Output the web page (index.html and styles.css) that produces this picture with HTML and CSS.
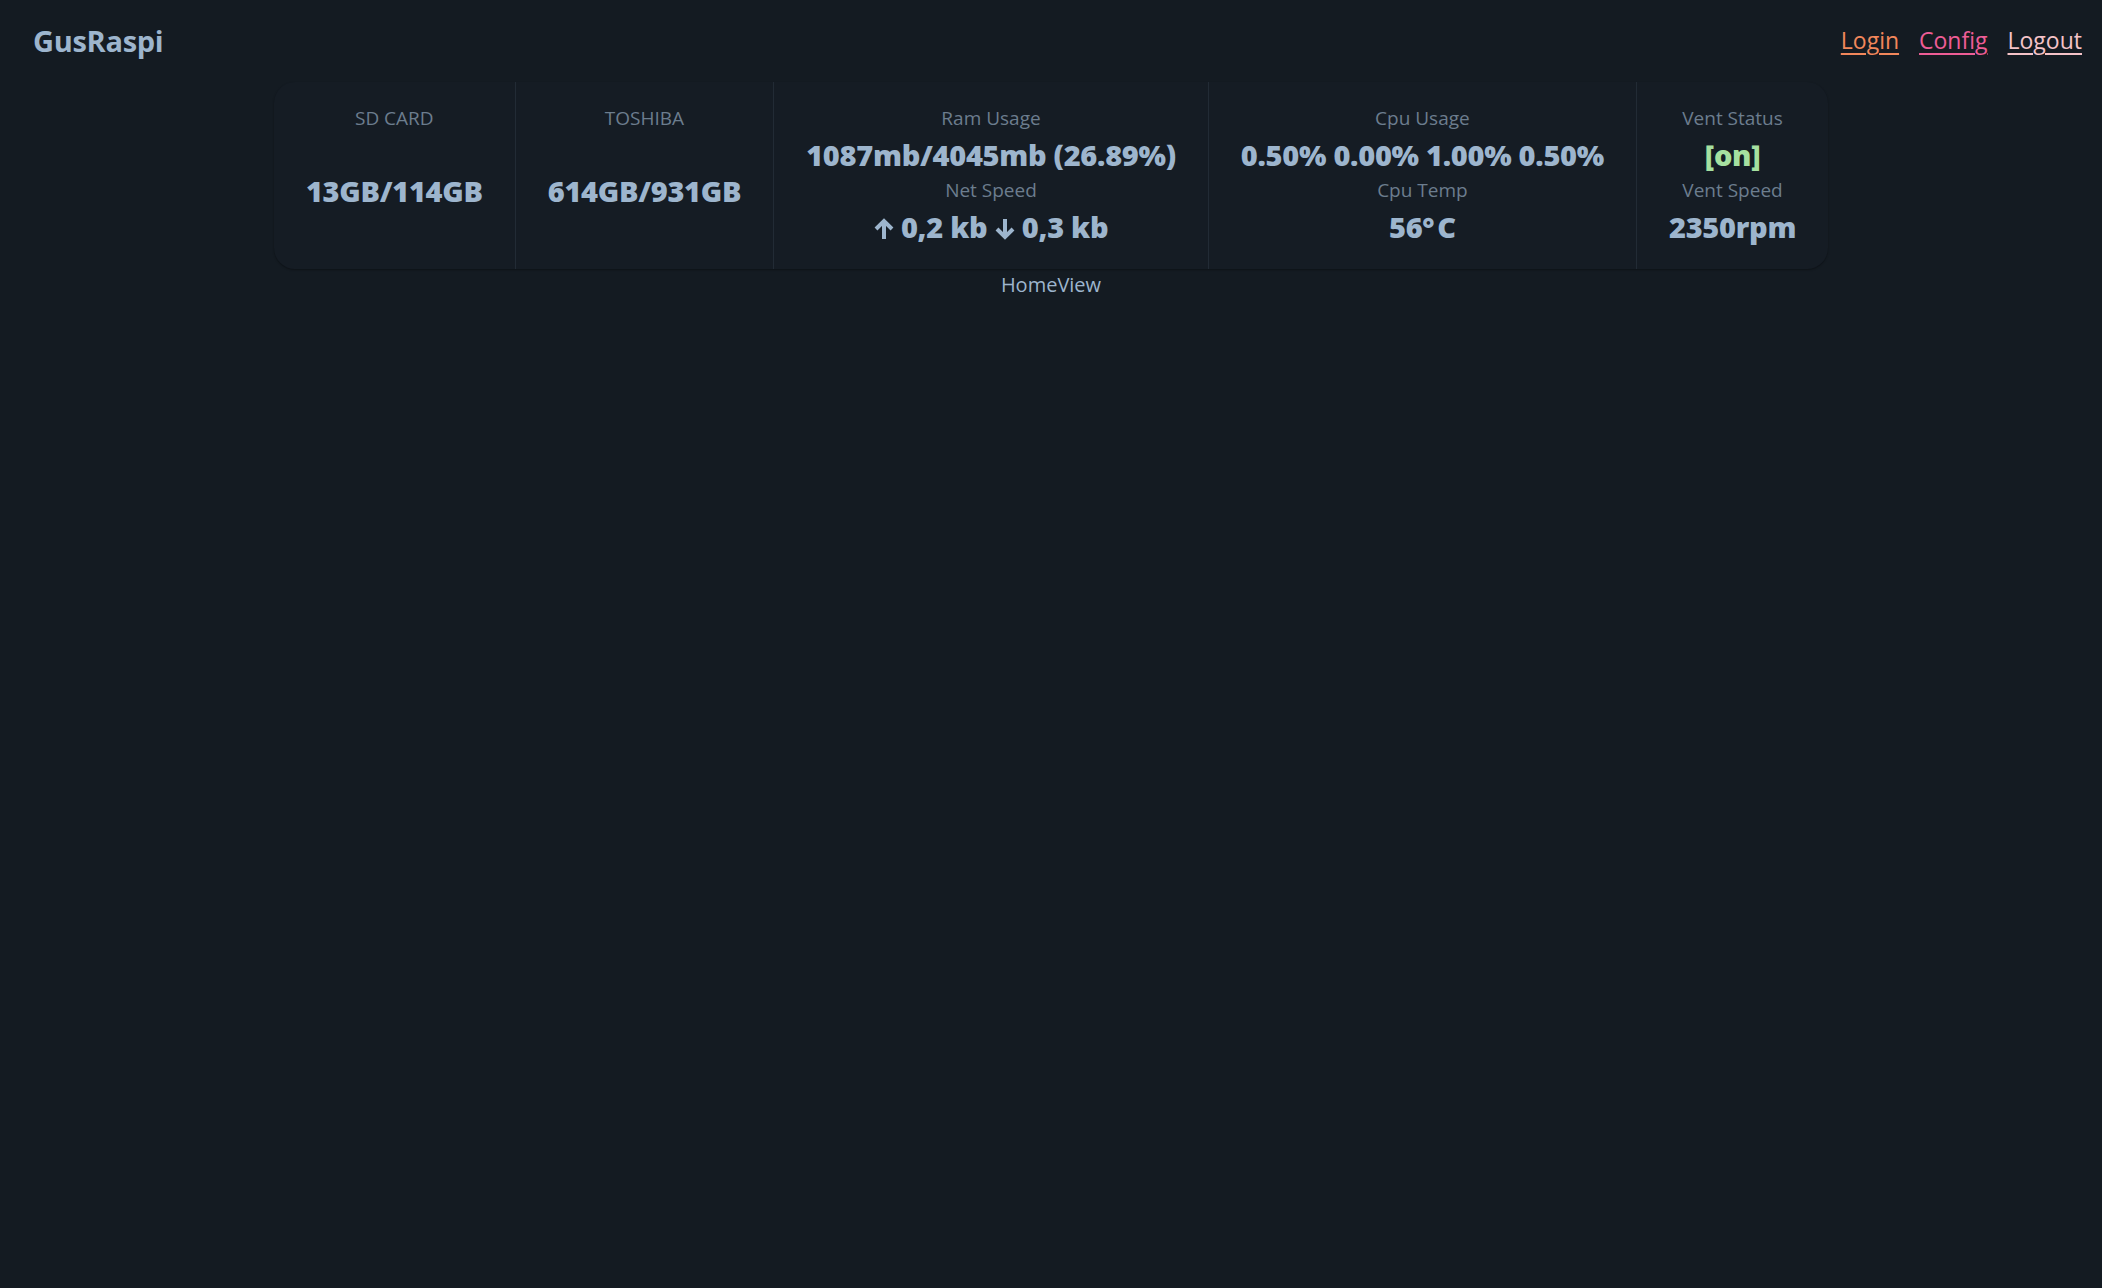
FILE: index.html
```html
<!DOCTYPE html>
<html lang="en">
<head>
<meta charset="utf-8">
<title>GusRaspi</title>
<link rel="stylesheet" href="styles.css">
</head>
<body>
<header class="navbar">
  <a class="brand">GusRaspi</a>
  <nav class="links">
    <a class="link link-login" href="#">Login</a>
    <a class="link link-config" href="#">Config</a>
    <a class="link link-logout" href="#">Logout</a>
  </nav>
</header>
<main class="main">
  <section class="stats">
    <div class="stat">
      <div class="stat-title">SD CARD</div>
      <div class="stat-value">13GB/114GB</div>
    </div>
    <div class="stat">
      <div class="stat-title">TOSHIBA</div>
      <div class="stat-value">614GB/931GB</div>
    </div>
    <div class="stat">
      <div class="stat-title">Ram Usage</div>
      <div class="stat-value">1087mb/4045mb (26.89%)</div>
      <div class="stat-title">Net Speed</div>
      <div class="stat-value"><svg class="arrow" viewBox="0 0 20 22" aria-hidden="true"><path d="M10 21V3M2 11l8-8 8 8"/></svg> 0,2 kb <svg class="arrow" viewBox="0 0 20 22" aria-hidden="true"><path d="M10 1v18M2 11l8 8 8-8"/></svg> 0,3 kb</div>
    </div>
    <div class="stat">
      <div class="stat-title">Cpu Usage</div>
      <div class="stat-value">0.50% 0.00% 1.00% 0.50%</div>
      <div class="stat-title">Cpu Temp</div>
      <div class="stat-value">56°<span class="deg-gap"></span>C</div>
    </div>
    <div class="stat">
      <div class="stat-title">Vent Status</div>
      <div class="stat-value stat-on">[on]</div>
      <div class="stat-title">Vent Speed</div>
      <div class="stat-value">2350rpm</div>
    </div>
  </section>
  <p class="view-name">HomeView</p>
</main>
</body>
</html>
```
FILE: styles.css
```css
html, body {
  margin: 0;
  padding: 0;
  background: #141b22;
  color: #9db5cd;
  font-family: "Open Sans", "Noto Sans", sans-serif;
}

.navbar {
  height: 80px;
  padding: 0 20px 2px 33px;
  display: flex;
  align-items: center;
  justify-content: space-between;
}

.brand {
  font-size: 29px;
  font-weight: 700;
  color: #9db5cd;
  letter-spacing: -0.3px;
}

.links {
  display: flex;
  gap: 20px;
  font-size: 23px;
}

.link {
  text-decoration: underline;
  text-underline-offset: 4px;
  text-decoration-thickness: 2px;
}

.link-login { color: #f2875b; }
.link-config { color: #ee5d96; }
.link-logout { color: #f5c3c8; }

.main {
  display: flex;
  flex-direction: column;
  align-items: center;
}

.stats {
  display: flex;
  background: #151c24;
  border-radius: 21px;
  box-shadow: 0 1px 2px rgba(0, 0, 0, 0.35);
}

.stat {
  display: grid;
  padding: 23px 32px 20px;
  text-align: center;
}

.stat + .stat {
  border-left: 1px solid #222b35;
}

.stat-title {
  font-size: 19px;
  line-height: 27px;
  color: #6c7d8e;
  white-space: nowrap;
}

.stat-value {
  font-size: 29px;
  line-height: 45px;
  font-weight: 800;
  color: #9db5cd;
  white-space: nowrap;
  letter-spacing: -0.3px;
}

.stat-on {
  color: #a6e0a0;
}

.deg-gap {
  display: inline-block;
  width: 3px;
}

.arrow {
  width: 20px;
  height: 22px;
  vertical-align: -2px;
  fill: none;
  stroke: currentColor;
  stroke-width: 4;
  stroke-linecap: butt;
  stroke-linejoin: miter;
}

.view-name {
  margin: 2px 0 0;
  font-size: 20px;
  line-height: 28px;
  color: #9db5cd;
}
```
